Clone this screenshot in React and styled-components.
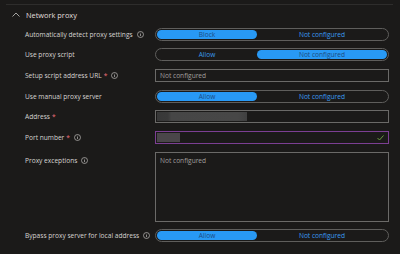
import React from 'react';
import styled, { createGlobalStyle } from 'styled-components';

const GlobalStyle = createGlobalStyle`
  body {
    margin: 0;
    background: #1b1a19;
    font-family: 'Open Sans', 'Liberation Sans', sans-serif;
  }
`;

const Page = styled.div`
  width: 400px;
  height: 254px;
  padding-top: 4px;
  box-sizing: border-box;
  background: #1b1a19;
  overflow: hidden;
`;

const Section = styled.section`
  margin: 0 7px 0 6px;
  border-top: 1px solid #2e2d2c;
`;

const SectionHeader = styled.div`
  display: flex;
  align-items: center;
  height: 19px;
  padding-left: 6px;
  gap: 6px;
  color: #e1dfdd;
  font-size: 7.4px;
`;

const Rows = styled.div`
  display: flex;
  flex-direction: column;
  gap: 7.7px;
  padding-top: 3.6px;
`;

const Row = styled.div`
  display: flex;
  align-items: ${(p) => (p.$top ? 'flex-start' : 'center')};
`;

const Label = styled.div`
  display: flex;
  align-items: center;
  gap: 4px;
  width: 149px;
  padding-left: 19px;
  box-sizing: border-box;
  flex: 0 0 auto;
  white-space: nowrap;
  color: #d6d4d2;
  font-size: 6.6px;
  padding-top: ${(p) => (p.$top ? '4px' : '0')};
`;

const Required = styled.span`
  color: #f1707b;
  margin-left: -2px;
`;

const Toggle = styled.div`
  display: flex;
  width: 234px;
  height: 13px;
  box-sizing: border-box;
  border: 1px solid #5f5e5c;
  border-radius: 7px;
  padding: 1px;
`;

const Segment = styled.div`
  flex: ${(p) => (p.$wide ? '1 1 auto' : '0 0 100px')};
  display: flex;
  align-items: center;
  justify-content: center;
  border-radius: 6px;
  font-size: 6.6px;
  background: ${(p) => (p.$on ? '#2899f5' : 'transparent')};
  color: ${(p) => (p.$on ? '#1c4c82' : '#3a9bf0')};
`;

const Input = styled.div`
  position: relative;
  display: flex;
  align-items: ${(p) => (p.$multi ? 'flex-start' : 'center')};
  width: 234px;
  height: ${(p) => (p.$multi ? '70px' : '13px')};
  box-sizing: border-box;
  border: 1px solid ${(p) => (p.$focus ? '#7c3f93' : '#6b6a68')};
  padding: ${(p) => (p.$multi ? '3px 4px' : '1px')};
  color: #a19f9d;
  font-size: 6.6px;
`;

const Placeholder = styled.span`
  padding-left: ${(p) => (p.$inset ? '3px' : '0')};
`;

const Redacted = styled.div`
  height: 100%;
  width: ${(p) => p.$w}px;
  background: ${(p) =>
    p.$wide
      ? 'linear-gradient(90deg, #383838 0%, #3a3a3a 12%, #464646 16%, #474747 90%, #404040 100%)'
      : '#4a4649'};
`;

const Check = styled.svg`
  position: absolute;
  right: 4px;
  top: 3px;
`;

const InfoIcon = () => (
  <svg width="7" height="7" viewBox="0 0 14 14">
    <circle cx="7" cy="7" r="6" fill="none" stroke="#bdbbb9" strokeWidth="1.4" />
    <rect x="6.3" y="6" width="1.4" height="4.2" fill="#bdbbb9" />
    <rect x="6.3" y="3.6" width="1.4" height="1.4" fill="#bdbbb9" />
  </svg>
);

const Chevron = () => (
  <svg width="8" height="5" viewBox="0 0 16 10">
    <path d="M1 9 L8 2 L15 9" fill="none" stroke="#c8c6c4" strokeWidth="1.6" />
  </svg>
);

const ToggleField = ({ left, right, value }) => (
  <Toggle>
    <Segment $on={value === 'left'}>{left}</Segment>
    <Segment $wide $on={value === 'right'}>{right}</Segment>
  </Toggle>
);

export default function App() {
  return (
    <Page>
      <GlobalStyle />
      <Section>
        <SectionHeader>
          <Chevron />
          <span>Network proxy</span>
        </SectionHeader>
        <Rows>
          <Row>
            <Label>
              Automatically detect proxy settings <InfoIcon />
            </Label>
            <ToggleField left="Block" right="Not configured" value="left" />
          </Row>
          <Row>
            <Label>Use proxy script</Label>
            <ToggleField left="Allow" right="Not configured" value="right" />
          </Row>
          <Row>
            <Label>
              Setup script address URL <Required>*</Required> <InfoIcon />
            </Label>
            <Input>
              <Placeholder $inset>Not configured</Placeholder>
            </Input>
          </Row>
          <Row>
            <Label>Use manual proxy server</Label>
            <ToggleField left="Allow" right="Not configured" value="left" />
          </Row>
          <Row>
            <Label>
              Address <Required>*</Required>
            </Label>
            <Input>
              <Redacted $wide $w={90} />
            </Input>
          </Row>
          <Row>
            <Label>
              Port number <Required>*</Required> <InfoIcon />
            </Label>
            <Input $focus>
              <Redacted $w={23} />
              <Check width="7" height="6" viewBox="0 0 14 12">
                <path d="M1 6 L5 10 L13 1" fill="none" stroke="#6a9a3f" strokeWidth="2" />
              </Check>
            </Input>
          </Row>
          <Row $top>
            <Label $top>
              Proxy exceptions <InfoIcon />
            </Label>
            <Input $multi>
              <Placeholder>Not configured</Placeholder>
            </Input>
          </Row>
          <Row>
            <Label>
              Bypass proxy server for local address <InfoIcon />
            </Label>
            <ToggleField left="Allow" right="Not configured" value="left" />
          </Row>
        </Rows>
      </Section>
    </Page>
  );
}
